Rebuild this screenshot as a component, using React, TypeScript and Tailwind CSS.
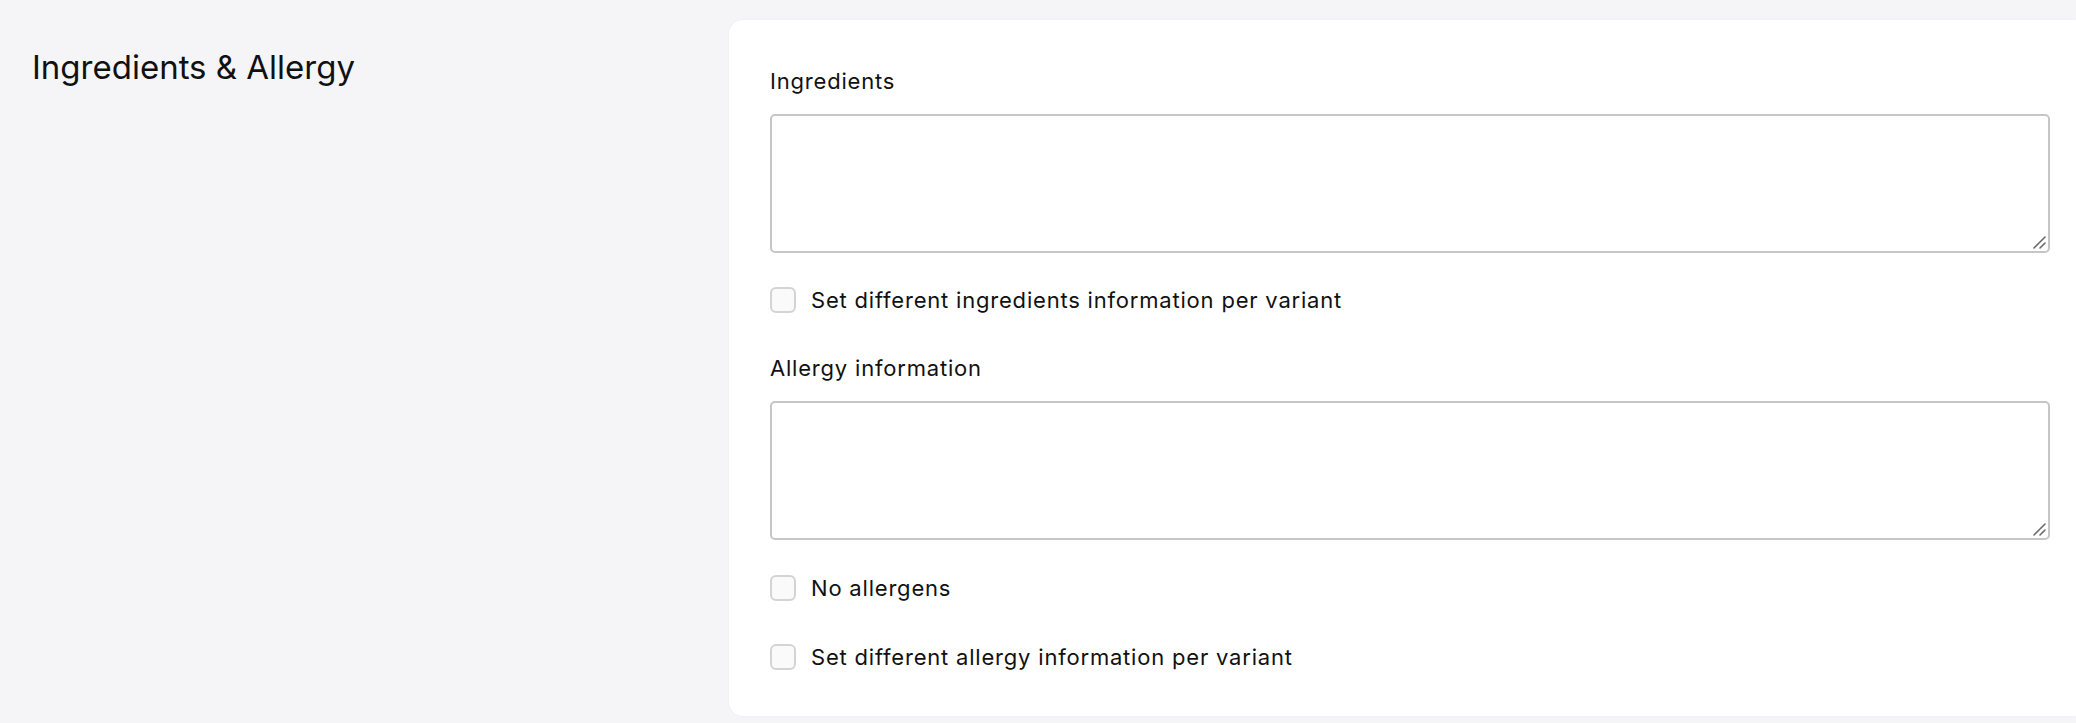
import React from 'react';

function Checkbox({ label }: { label: string }) {
  return (
    <label className="flex items-center gap-[15px] cursor-pointer">
      <input
        type="checkbox"
        className="appearance-none w-[26px] h-[26px] rounded-[6px] border-2 border-[#d4d4d6] bg-[#fafafa] shrink-0"
      />
      <span className="text-[22px] leading-[30px] tracking-[0.8px] text-[#111]">{label}</span>
    </label>
  );
}

function Field({ label }: { label: string }) {
  return (
    <div className="flex flex-col">
      <div className="text-[22px] leading-[30px] tracking-[0.8px] text-[#111] mb-[18px]">{label}</div>
      <div className="relative">
        <textarea className="block h-[139px] w-full rounded-[5px] border-2 border-[#c6c6c6] bg-white outline-none resize-none" />
        {/* resize grip */}
        <svg className="absolute right-[4px] bottom-[4px]" width="14" height="14" viewBox="0 0 14 14">
          <path d="M2 13 L13 2 M8 13 L13 8" stroke="#6b6b6b" strokeWidth="1.6" strokeLinecap="round" />
        </svg>
      </div>
    </div>
  );
}

export default function App() {
  return (
    <div
      className="min-h-[723px] bg-[#f5f5f7] flex pt-[20px] overflow-hidden"
      style={{ fontFamily: 'Inter, "Noto Sans", sans-serif' }}
    >
      <div className="w-[729px] shrink-0 pl-[32px] pt-[27px]">
        <h2 className="text-[33px] leading-[40px] font-normal text-[#111]">Ingredients &amp; Allergy</h2>
      </div>

      <div className="flex-1 h-[696px] bg-white rounded-l-[14px] shadow-[0_0_3px_rgba(0,0,0,0.04)] pl-[41px] pr-[26px] pt-[46px] pb-[49px]">
        <Field label="Ingredients" />

        <div className="mt-[32px]">
          <Checkbox label="Set different ingredients information per variant" />
        </div>

        <div className="mt-[38px]">
          <Field label="Allergy information" />
        </div>

        <div className="mt-[33px] flex flex-col gap-[39px]">
          <Checkbox label="No allergens" />
          <Checkbox label="Set different allergy information per variant" />
        </div>
      </div>
    </div>
  );
}
